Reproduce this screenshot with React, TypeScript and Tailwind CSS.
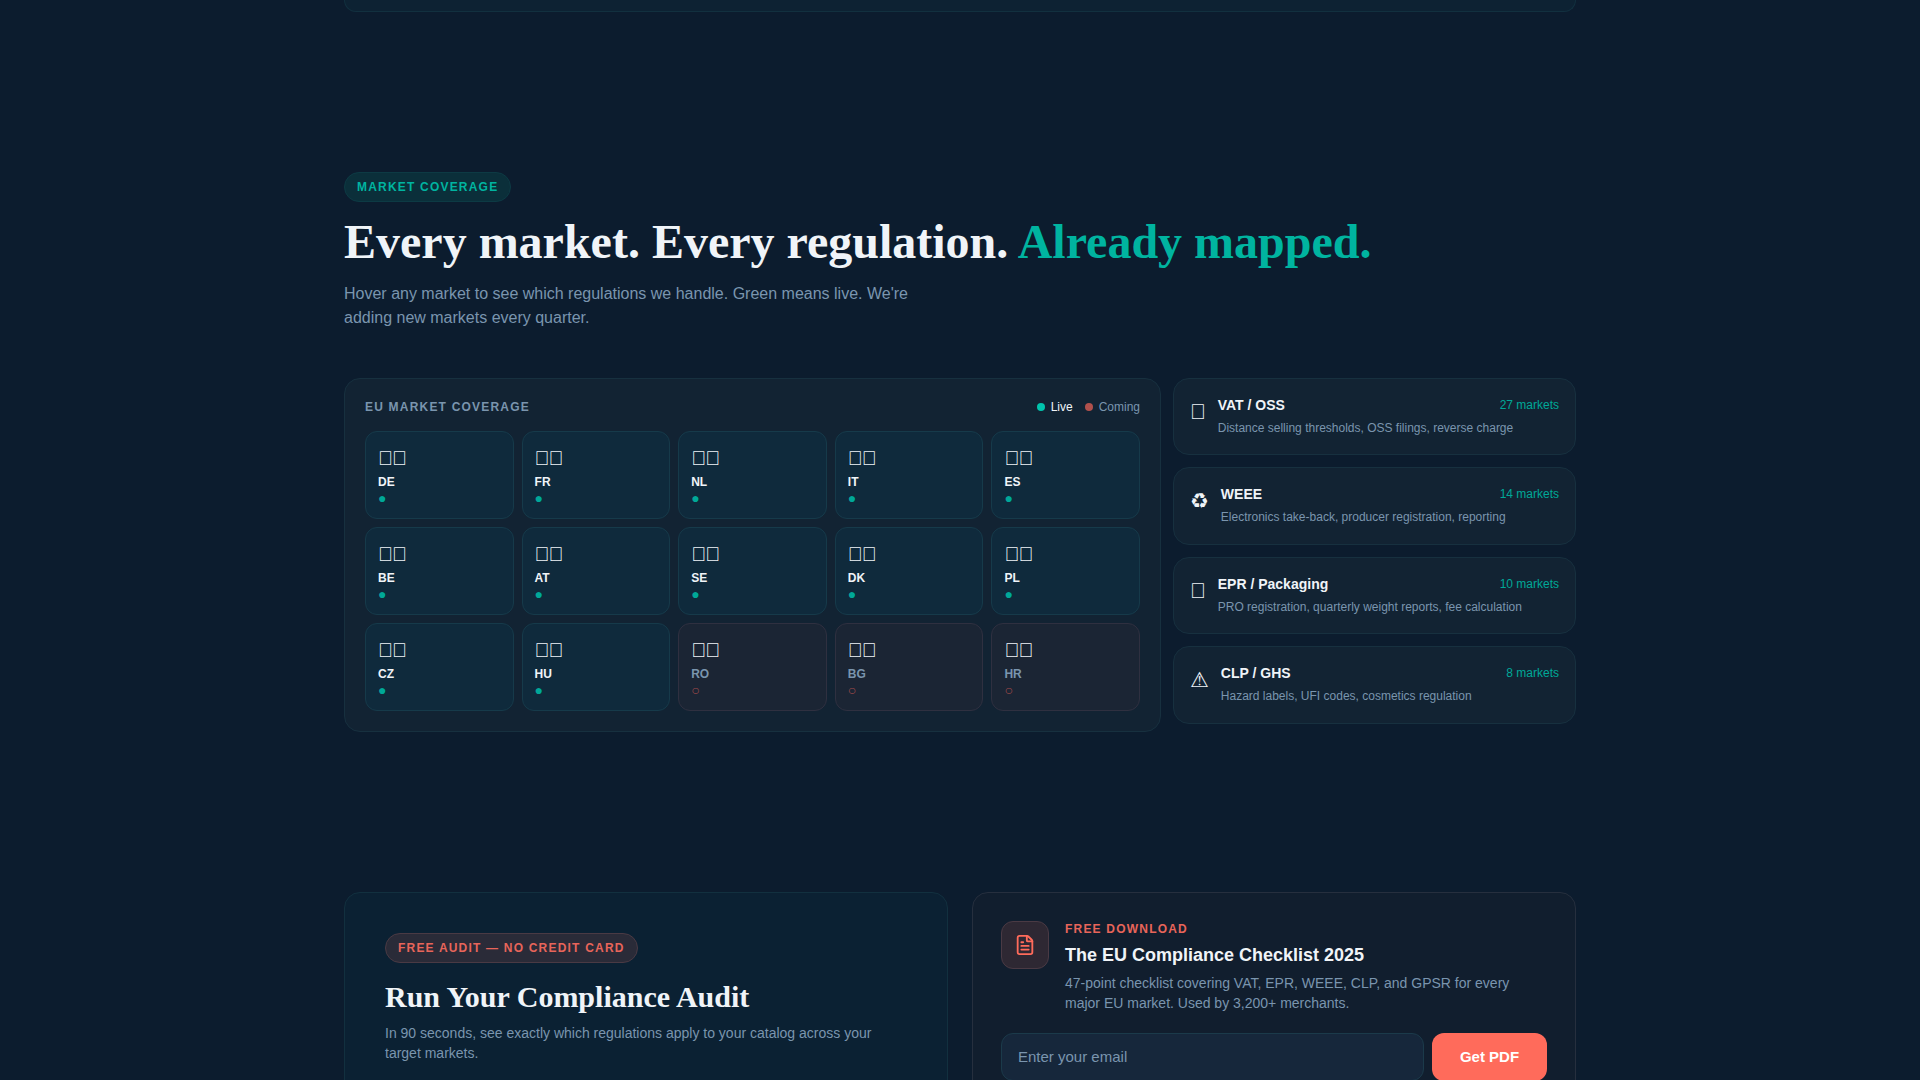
import { FileText } from "lucide-react";

// flags and two of the icons show up as missing-glyph boxes in the design
const tofu = "\uE000";

const markets = [
  { code: "DE", live: true },
  { code: "FR", live: true },
  { code: "NL", live: true },
  { code: "IT", live: true },
  { code: "ES", live: true },
  { code: "BE", live: true },
  { code: "AT", live: true },
  { code: "SE", live: true },
  { code: "DK", live: true },
  { code: "PL", live: true },
  { code: "CZ", live: true },
  { code: "HU", live: true },
  { code: "RO", live: false },
  { code: "BG", live: false },
  { code: "HR", live: false },
];

const regulations = [
  { icon: tofu, title: "VAT / OSS", count: "27 markets", desc: "Distance selling thresholds, OSS filings, reverse charge", height: "h-[77px]" },
  { icon: "\u267B\uFE0E", title: "WEEE", count: "14 markets", desc: "Electronics take-back, producer registration, reporting", height: "h-[78px]" },
  { icon: tofu, title: "EPR / Packaging", count: "10 markets", desc: "PRO registration, quarterly weight reports, fee calculation", height: "h-[77px]" },
  { icon: "\u26A0\uFE0E", title: "CLP / GHS", count: "8 markets", desc: "Hazard labels, UFI codes, cosmetics regulation", height: "h-[78px]" },
];

function MarketCard({ code, live }: { code: string; live: boolean }) {
  return (
    <div
      className={
        live
          ? "h-[88px] rounded-xl border border-[#163a4a] bg-[#0f2a3c] px-3 pt-[11px]"
          : "h-[88px] rounded-xl border border-[#2f3040] bg-[#1b2534] px-3 pt-[11px]"
      }
    >
      <div className="text-[20px] leading-[30px] tracking-[-1px] text-[#f0f4f8]">{tofu + tofu}</div>
      <div className={live ? "text-xs font-bold leading-[18px] text-[#f0f4f8]" : "text-xs font-bold leading-[18px] text-[#7a95ae]"}>
        {code}
      </div>
      <div className={live ? "text-[14px] leading-[14px] text-[#00a898]" : "text-[14px] leading-[14px] text-[#a04a4a]"}>
        {live ? "●" : "○"}
      </div>
    </div>
  );
}

export default function App() {
  return (
    <div className="h-[1080px] overflow-hidden bg-[#0c1c2e] font-['Liberation_Sans',sans-serif]">
      <div className="mx-auto w-[1232px]">
        <div className="h-3 rounded-b-2xl border-x border-b border-[#12303f] bg-[#0d2233]" />

        <section className="pt-40 pb-20">
          <span className="inline-block rounded-full border border-[#0d3a44] bg-[#0b2f3a] px-3 py-[5px] text-xs font-bold leading-[18px] tracking-[1.2px] text-[#00b4a0]">
            MARKET COVERAGE
          </span>
          <h2 className="mt-[11px] font-['Liberation_Serif',serif] text-5xl font-bold leading-[58px] text-[#f0f4f8]">
            Every market. Every regulation. <span className="text-[#00b4a0]">Already mapped.</span>
          </h2>
          <p className="mt-[11px] max-w-[580px] text-base leading-6 text-[#7a95ae]">
            Hover any market to see which regulations we handle. Green means live. We're adding new markets every quarter.
          </p>

          <div className="mt-12 grid grid-cols-[817px_1fr] items-start gap-3">
            <div className="rounded-2xl border border-[#17303f] bg-[#122333] p-5">
              <div className="mb-4 flex h-4 items-center justify-between">
                <span className="text-xs font-bold tracking-[1.2px] text-[#7a95ae]">EU MARKET COVERAGE</span>
                <div className="flex items-center gap-3 text-xs">
                  <span className="flex items-center gap-[6px] text-[#f0f4f8]">
                    <span className="h-2 w-2 rounded-full bg-[#00c4ad]" />
                    Live
                  </span>
                  <span className="flex items-center gap-[6px] text-[#7a95ae]">
                    <span className="h-2 w-2 rounded-full bg-[#b0504c]" />
                    Coming
                  </span>
                </div>
              </div>
              <div className="grid grid-cols-5 gap-2">
                {markets.map((m) => (
                  <MarketCard key={m.code} {...m} />
                ))}
              </div>
            </div>

            <div className="flex flex-col gap-3">
              {regulations.map((r) => (
                <div key={r.title} className={`flex items-start gap-3 rounded-2xl border border-[#17303f] bg-[#122333] p-4 ${r.height}`}>
                  <span className="font-['Liberation_Sans','DejaVu_Sans',sans-serif] text-[21px] leading-[33px] text-[#f0f4f8]">{r.icon}</span>
                  <div className="flex-1">
                    <div className="flex items-start justify-between">
                      <span className="text-sm font-bold leading-[21px] text-[#f0f4f8]">{r.title}</span>
                      <span className="mt-px text-xs leading-[18px] text-[#00a898]">{r.count}</span>
                    </div>
                    <p className="mt-[3px] text-xs leading-[19px] text-[#7a95ae]">{r.desc}</p>
                  </div>
                </div>
              ))}
            </div>
          </div>
        </section>

        <section className="grid grid-cols-2 gap-6 pt-20">
          <div className="h-[400px] rounded-2xl border border-[#12303f] bg-[#0b2133] p-10">
            <span className="inline-block rounded-full border border-[#4a3a44] bg-[#2a2b38] px-3 py-[5px] text-xs font-bold leading-[18px] tracking-[1.2px] text-[#e8655a]">
              FREE AUDIT — NO CREDIT CARD
            </span>
            <h3 className="mt-[15px] font-['Liberation_Serif',serif] text-[30px] font-bold leading-[38px] text-[#f0f4f8]">
              Run Your Compliance Audit
            </h3>
            <p className="mt-[7px] text-sm leading-[20px] text-[#7a95ae]">
              In 90 seconds, see exactly which regulations apply to your catalog across your target markets.
            </p>
          </div>

          <div className="h-[400px] rounded-2xl border border-[#262f3e] bg-[#111e2e] p-7">
            <div className="flex gap-4">
              <div className="flex h-12 w-12 shrink-0 items-center justify-center rounded-xl border border-[#4a3a44] bg-[#2e2833]">
                <FileText size={22} strokeWidth={2} className="text-[#ff6b5b]" />
              </div>
              <div>
                <div className="-mt-px text-xs font-bold leading-[18px] tracking-[1.2px] text-[#e8655a]">FREE DOWNLOAD</div>
                <div className="mt-[4px] text-lg font-bold leading-[27px] text-[#f0f4f8]">The EU Compliance Checklist 2025</div>
                <p className="mt-[4px] text-sm leading-[20px] text-[#7a95ae]">
                  47-point checklist covering VAT, EPR, WEEE, CLP, and GPSR for every major EU market. Used by 3,200+ merchants.
                </p>
              </div>
            </div>
            <div className="mt-[20px] flex gap-2">
              <input
                placeholder="Enter your email"
                className="h-12 flex-1 rounded-xl border border-[#1b3a4a] bg-[#16273b] px-4 pb-[2px] text-[15px] text-[#f0f4f8] placeholder:text-[#7a95ae]"
              />
              <button className="h-12 w-[115px] rounded-xl bg-[#ff6b5b] text-[15px] font-bold text-white">Get PDF</button>
            </div>
          </div>
        </section>
      </div>
    </div>
  );
}
